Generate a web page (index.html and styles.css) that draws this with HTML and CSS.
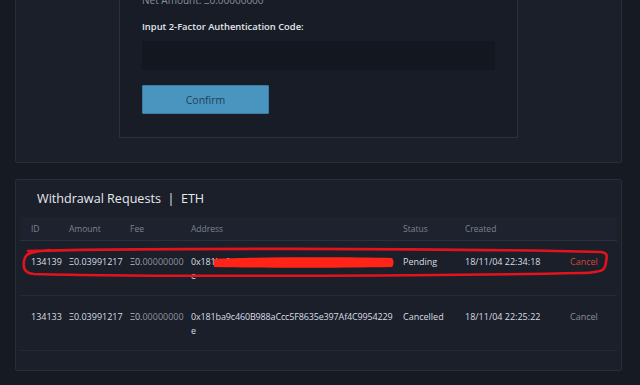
FILE: index.html
```html
<!DOCTYPE html>
<html lang="en">
<head>
  <meta charset="utf-8">
  <title>Withdraw ETH</title>
  <link rel="stylesheet" href="styles.css">
</head>
<body>
  <div class="wrap">
    <div class="panel panel-form">
      <div class="form-card">
        <div class="net">Net Amount: Ξ0.00000000</div>
        <label class="label" for="code">Input 2-Factor Authentication Code:</label>
        <input class="code-input" id="code" type="text">
        <button class="confirm">Confirm</button>
      </div>
    </div>

    <div class="panel panel-list">
      <h2 class="title">Withdrawal Requests &nbsp;|&nbsp; ETH</h2>
      <div class="table">
        <div class="row head">
          <div>ID</div>
          <div>Amount</div>
          <div>Fee</div>
          <div>Address</div>
          <div>Status</div>
          <div>Created</div>
          <div></div>
        </div>
        <div class="row">
          <div>134139</div>
          <div>Ξ0.03991217</div>
          <div class="fee">Ξ0.<span>00000000</span></div>
          <div class="addr">0x181ba9c460B988aCcc5F8635e397Af4C9954229e</div>
          <div>Pending</div>
          <div>18/11/04 22:34:18</div>
          <div class="cancel active">Cancel</div>
        </div>
        <div class="row">
          <div>134133</div>
          <div>Ξ0.03991217</div>
          <div class="fee">Ξ0.<span>00000000</span></div>
          <div class="addr">0x181ba9c460B988aCcc5F8635e397Af4C9954229e</div>
          <div>Cancelled</div>
          <div>18/11/04 22:25:22</div>
          <div class="cancel">Cancel</div>
        </div>
      </div>

      <!-- red markup drawn over the screenshot -->
      <svg class="markup" width="607" height="120" viewBox="0 0 607 120">
        <path d="M12 71 C 120 68, 420 68, 585 72 C 592 73, 591 76, 590 82 C 589 89, 590 92, 566 93 C 420 96, 120 97, 18 94 C 8 93, 7 88, 8 81 C 9 75, 10 72, 34 70" fill="none" stroke="#e3131d" stroke-width="2.6" stroke-linecap="round"/>
        <path d="M198 79 C 240 77, 330 77, 376 78 C 378 80, 378 85, 376 87 C 320 88, 240 88, 198 87 Z" fill="#ff2417"/>
      </svg>
    </div>
  </div>
</body>
</html>
```

FILE: styles.css
```css
body {
  margin: 0;
  background-color: #151a23;
  font-family: "Open Sans", "Noto Sans", sans-serif;
  color: #d9dde4;
}

.wrap {
  padding: 0 18px 0 15px;
}

.panel {
  background-color: #1a1f2a;
  border: 1px solid #272d39;
  border-radius: 2px;
  box-sizing: border-box;
}

.panel-form {
  margin-top: -45px;
  padding: 0 0 24px 103px;
}

.form-card {
  width: 399px;
  box-sizing: border-box;
  padding: 37px 0 23px 22px;
  background-color: #171c26;
  border: 1px solid #2a303c;
  border-top: none;
}

.net {
  font-size: 10px;
  line-height: 14px;
  color: #8a909b;
}

.label {
  display: block;
  margin-top: 13px;
  font-size: 9.4px;
  line-height: 14px;
  font-weight: 600;
  color: #e4e7ec;
}

.code-input {
  display: block;
  width: 353px;
  height: 29px;
  margin-top: 7px;
  box-sizing: border-box;
  border: none;
  background-color: #131720;
}

.confirm {
  display: block;
  margin-top: 15px;
  width: 127px;
  height: 29px;
  background-color: #4a95bf;
  border: 1px solid #3b7ca3;
  border-radius: 1px;
  color: #22405a;
  font-family: inherit;
  font-size: 10.5px;
}

.panel-list {
  position: relative;
  margin-top: 16px;
  height: 192px;
  padding: 0 4px;
}

.title {
  margin: 0;
  padding: 10px 0 0 17px;
  height: 37px;
  box-sizing: border-box;
  font-size: 12.6px;
  line-height: 18px;
  font-weight: 400;
  color: #e6e9ee;
}

.row {
  display: grid;
  grid-template-columns: 38px 61px 61px 212px 62px 105px 1fr;
  padding-left: 11px;
  height: 55px;
  box-sizing: border-box;
  padding-top: 14px;
  border-bottom: 1px solid #252b36;
  font-size: 9px;
  line-height: 14px;
  color: #d9dde4;
}

.row.head {
  height: 24px;
  padding-top: 5px;
  background-color: #1d222e;
  border-bottom: 1px solid #2a303c;
  color: #7b8391;
  font-size: 8.5px;
}

.fee {
  color: #b6bcc6;
}

.fee span {
  color: #8d94a0;
}

.addr {
  width: 203px;
  letter-spacing: -0.15px;
  word-break: break-all;
}

.cancel {
  color: #8a8f99;
}

.cancel.active {
  color: #d2483a;
}

.markup {
  position: absolute;
  left: 0;
  top: 0;
}
```
